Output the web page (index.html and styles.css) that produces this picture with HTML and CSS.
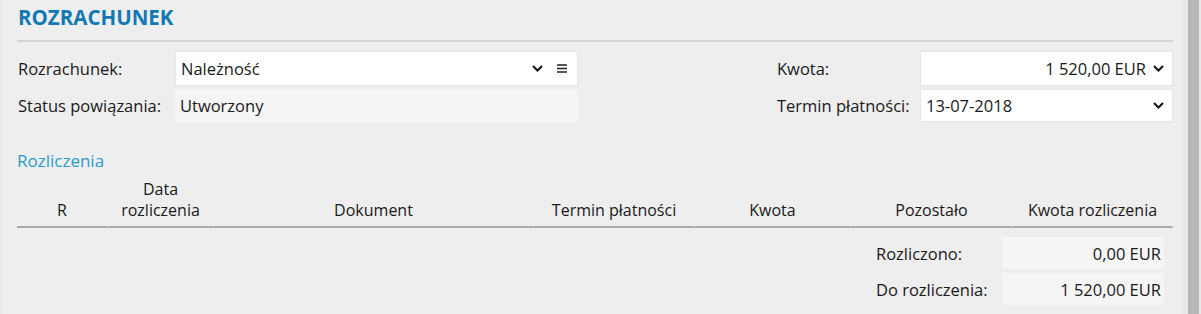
FILE: index.html
```html
<!DOCTYPE html>
<html lang="pl">
<head>
    <meta charset="UTF-8">
    <title>Rozrachunek</title>
    <link rel="stylesheet" href="styles.css">
</head>
<body>

<div class="content">
    <!-- Header -->
    <h1 class="title">ROZRACHUNEK</h1>

    <!-- Main form -->
    <div class="form-grid">
        <div class="label">Rozrachunek:</div>
        <div class="field white with-menu">
            <span class="value">Należność</span>
            <svg class="chevron" width="11" height="7" viewBox="0 0 11 7"><polyline points="1,1 5.5,5.5 10,1" fill="none" stroke="#111" stroke-width="2"/></svg>
            <span class="menu-btn">
                <svg width="10" height="9" viewBox="0 0 10 9"><path d="M0 1h10M0 4.5h10M0 8h10" stroke="#222" stroke-width="1.3"/></svg>
            </span>
        </div>
        <div></div>
        <div class="label">Kwota:</div>
        <div class="field white">
            <span class="value right">1 520,00 EUR</span>
            <svg class="chevron" width="11" height="7" viewBox="0 0 11 7"><polyline points="1,1 5.5,5.5 10,1" fill="none" stroke="#111" stroke-width="2"/></svg>
        </div>

        <div class="label">Status powiązania:</div>
        <div class="field grey">
            <span class="value">Utworzony</span>
        </div>
        <div></div>
        <div class="label">Termin płatności:</div>
        <div class="field white">
            <span class="value">13-07-2018</span>
            <svg class="chevron" width="11" height="7" viewBox="0 0 11 7"><polyline points="1,1 5.5,5.5 10,1" fill="none" stroke="#111" stroke-width="2"/></svg>
        </div>
    </div>

    <!-- Settlements -->
    <h2 class="subtitle">Rozliczenia</h2>

    <div class="table-head">
        <div class="col">R</div>
        <div class="col">Data<br>rozliczenia</div>
        <div class="col">Dokument</div>
        <div class="col">Termin płatności</div>
        <div class="col">Kwota</div>
        <div class="col">Pozostało</div>
        <div class="col">Kwota rozliczenia</div>
    </div>

    <div class="summary">
        <div class="summary-row">
            <span class="summary-label">Rozliczono:</span>
            <span class="summary-value">0,00 EUR</span>
        </div>
        <div class="summary-row">
            <span class="summary-label">Do rozliczenia:</span>
            <span class="summary-value">1 520,00 EUR</span>
        </div>
    </div>
</div>

<!-- Scrollbar -->
<div class="scrollbar">
    <div class="thumb"></div>
</div>

</body>
</html>
```

FILE: styles.css
```css
body {
    font-family: "Open Sans", "Noto Sans", sans-serif;
    font-size: 16.5px;
    color: #1a1a1a;
    background-color: #eeeeee;
    margin: 0;
    padding: 0;
    display: flex;
    height: 314px;
    overflow: hidden;
}

.content {
    flex: 1;
    padding: 0 10px 0 16px;
    border-left: 1px solid #e6e6e6;
}

.title {
    margin: 0;
    padding: 2px 0 8px 1px;
    font-size: 20.5px;
    font-weight: 700;
    color: #1279b4;
    border-bottom: 2px solid #d4d4d4;
    line-height: 30px;
}

.form-grid {
    display: grid;
    grid-template-columns: 158px 403px 198px 144px 253px;
    grid-template-rows: 35px 33px;
    row-gap: 3px;
    margin-top: 9px;
}

.label {
    display: flex;
    align-items: center;
    padding-left: 1px;
}

.field {
    display: flex;
    align-items: center;
    padding: 0 8px 0 5px;
    box-sizing: border-box;
}

.field.white {
    background-color: #fff;
    border: 1px solid #e6e6e6;
}

.field.grey {
    background-color: #f5f5f5;
}

.value {
    flex: 1;
}

.value.right {
    text-align: right;
    padding-right: 7px;
}

.chevron {
    flex: none;
}

.with-menu {
    padding-right: 0;
}

.menu-btn {
    width: 30px;
    height: 100%;
    display: flex;
    align-items: center;
    justify-content: center;
    margin-left: 4px;
}

.subtitle {
    margin: 27px 0 0 0;
    font-size: 17px;
    font-weight: 400;
    color: #2b9ccf;
    line-height: 24px;
}

.table-head {
    display: grid;
    grid-template-columns: 91px 106px 320px 161px 156px 162px 160px;
    margin-top: 4px;
}

.col {
    text-align: center;
    font-size: 16px;
    line-height: 21px;
    padding-bottom: 5px;
    border-bottom: 2px solid #a9a9a9;
    border-right: 1px solid #eeeeee;
    display: flex;
    align-items: flex-end;
    justify-content: center;
    height: 51px;
    box-sizing: border-box;
}

.summary {
    display: flex;
    flex-direction: column;
    align-items: flex-end;
    gap: 4px;
    margin-top: 9px;
    padding-right: 9px;
}

.summary-row {
    display: flex;
    align-items: center;
}

.summary-label {
    width: 126px;
}

.summary-value {
    width: 162px;
    height: 32px;
    background-color: #f5f5f5;
    display: flex;
    align-items: center;
    justify-content: flex-end;
    padding-right: 3px;
    box-sizing: border-box;
}

.scrollbar {
    width: 18px;
    background-color: #e8e8e8;
    display: flex;
    justify-content: center;
}

.thumb {
    width: 11px;
    background-color: #b8b8b8;
    margin-left: 2px;
}
```
